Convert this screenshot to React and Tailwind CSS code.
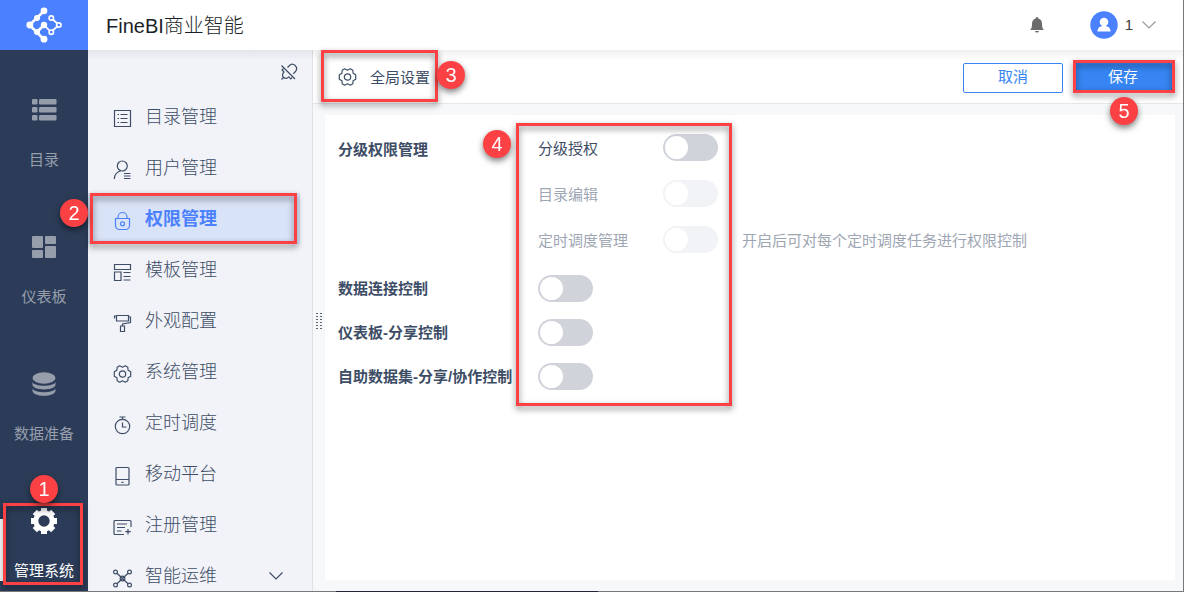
import { useState } from 'react'
import clsx from 'clsx'

const RAIL = [
  { label: '目录', icon: RailList },
  { label: '仪表板', icon: RailGrid },
  { label: '数据准备', icon: RailData },
  { label: '管理系统', icon: RailGear, active: true },
]

const MENU = [
  { label: '目录管理', icon: CatalogIcon },
  { label: '用户管理', icon: UserIcon },
  { label: '权限管理', icon: LockIcon, active: true },
  { label: '模板管理', icon: TemplateIcon },
  { label: '外观配置', icon: RollerIcon },
  { label: '系统管理', icon: GearIcon },
  { label: '定时调度', icon: TimerIcon },
  { label: '移动平台', icon: TabletIcon },
  { label: '注册管理', icon: RegisterIcon },
  { label: '智能运维', icon: NodesIcon, expandable: true },
]

const SUB_SETTINGS = [
  { id: 'grant', label: '分级授权' },
  { id: 'catalog', label: '目录编辑', disabled: true },
  {
    id: 'schedule',
    label: '定时调度管理',
    disabled: true,
    hint: '开启后可对每个定时调度任务进行权限控制',
  },
]

const SETTINGS = [
  { id: 'connection', label: '数据连接控制' },
  { id: 'dashboard', label: '仪表板-分享控制' },
  { id: 'dataset', label: '自助数据集-分享/协作控制' },
]

/* ---------- icons ---------- */

function Logo() {
  return (
    <svg width="36" height="36" viewBox="0 0 36 36" fill="none" stroke="#fff" aria-hidden="true">
      <path d="M18 4 3.500 18 18 32.500M11 25 18 18" strokeWidth="2.600" />
      <path d="M25.300 11 33 18l-8 7-7-7" strokeWidth="1.700" />
      <g fill="#fff" stroke="none">
        <circle cx="18" cy="3.800" r="3.400" />
        <circle cx="11" cy="11" r="3" />
        <circle cx="3.800" cy="18" r="3.400" />
        <circle cx="11" cy="25" r="3" />
        <circle cx="18" cy="18" r="3.200" />
        <circle cx="18" cy="32.200" r="3.400" />
      </g>
      <g fill="#4b80ff" strokeWidth="1.700">
        <circle cx="25.300" cy="11" r="2.200" />
        <circle cx="32.800" cy="18" r="2.200" />
        <circle cx="25.300" cy="25.200" r="2.200" />
      </g>
    </svg>
  )
}

function RailList() {
  return (
    <svg width="28" height="28" viewBox="0 0 28 28" fill="currentColor" aria-hidden="true">
      {[3, 11, 19].map((y) => (
        <g key={y}>
          <rect x="2" y={y} width="5.500" height="5.500" rx="1.200" />
          <rect x="9" y={y} width="17.500" height="5.500" rx="1.200" />
        </g>
      ))}
    </svg>
  )
}

function RailGrid() {
  return (
    <svg width="28" height="28" viewBox="0 0 28 28" fill="currentColor" aria-hidden="true">
      <rect x="2" y="3" width="11" height="12" rx="1" />
      <rect x="15" y="3" width="11" height="8" rx="1" />
      <rect x="2" y="17" width="11" height="8" rx="1" />
      <rect x="15" y="13" width="11" height="12" rx="1" />
    </svg>
  )
}

function RailData() {
  return (
    <svg width="28" height="28" viewBox="0 0 28 28" fill="currentColor" aria-hidden="true">
      <ellipse cx="14" cy="8" rx="11.500" ry="5.800" />
      <path d="M2.500 12c2 5 21 5 23 0v2.500c0 6.500-23 6.500-23 0z" />
      <path d="M2.500 18.500c2 5 21 5 23 0v2c0 7-23 7-23 0z" />
    </svg>
  )
}

function RailGear() {
  return (
    <svg width="28" height="28" viewBox="0 0 28 28" fill="none" stroke="currentColor" aria-hidden="true">
      <circle cx="14" cy="14" r="8.200" strokeWidth="5" />
      {[0, 45, 90, 135].map((deg) => (
        <path
          key={deg}
          d="M14 1v4M14 23v4"
          strokeWidth="6"
          transform={`rotate(${deg} 14 14)`}
        />
      ))}
    </svg>
  )
}

function LineIcon({ children }) {
  return (
    <svg
      width="20"
      height="20"
      viewBox="0 0 20 20"
      fill="none"
      stroke="currentColor"
      strokeWidth="1.200"
      className="shrink-0"
      aria-hidden="true"
    >
      {children}
    </svg>
  )
}

function CatalogIcon() {
  return (
    <LineIcon>
      <path d="M2.500 1.500h16v16h-16zM5.500 5.500h1.500M8.500 5.500h7M5.500 9.500h1.500M8.500 9.500h7M5.500 13.500h1.500M8.500 13.500h7" />
    </LineIcon>
  )
}

function UserIcon() {
  return (
    <LineIcon>
      <circle cx="10.300" cy="6" r="5" />
      <path d="M2.300 19c0-4.500 2.500-7 6.200-8.300M12 13.500h6.500M12 16h6.500M12 18.500h6.500" />
    </LineIcon>
  )
}

function LockIcon() {
  return (
    <LineIcon>
      <path d="M6 7.500V6a4.500 4.500 0 0 1 9 0v1.500M3.500 7.500h14v7a4 4 0 0 1-4 4h-6a4 4 0 0 1-4-4z" />
      <circle cx="10.500" cy="12.800" r="2" />
    </LineIcon>
  )
}

function TemplateIcon() {
  return (
    <LineIcon>
      <path d="M2.500 2.500h16v5h-16zM2.500 10h6.500v8.500H2.500zM11.500 10.500h7M11.500 14.500h7M11.500 18h7" />
    </LineIcon>
  )
}

function RollerIcon() {
  return (
    <LineIcon>
      <path d="M4.500 2.500h12v5.500h-12zM2.500 5.500v-2.500h2M16.500 4h2v5.500l-8 1.500v2M8.500 13h4v5.500h-4z" />
    </LineIcon>
  )
}

function GearIcon() {
  return (
    <LineIcon>
      <path
        strokeLinejoin="round"
        d="M7.700 1.800 10.500 3.200l2.800-1.400 2.500 1.500.3 2.900 2.600 1.600v4.400l-2.600 1.600-.3 2.900-2.500 1.500-2.800-1.400-2.800 1.400-2.500-1.500-.3-2.900-2.600-1.600V7.800l2.600-1.600.3-2.900z"
      />
      <circle cx="10.500" cy="10" r="3.200" />
    </LineIcon>
  )
}

function TimerIcon() {
  return (
    <LineIcon>
      <circle cx="10.500" cy="11.500" r="7.200" />
      <path d="M7.500 2h6M10.500 2v2.300M10.500 7.500v4.500h4" />
    </LineIcon>
  )
}

function TabletIcon() {
  return (
    <LineIcon>
      <rect x="4" y="1.500" width="13" height="17.500" rx="1" />
      <path d="M4 13.500h13M9.500 16.300h2" />
    </LineIcon>
  )
}

function RegisterIcon() {
  return (
    <LineIcon>
      <path d="M12 17.500H3a1 1 0 0 1-1-1v-12a1 1 0 0 1 1-1h15a1 1 0 0 1 1 1V10M5 7h10M5 10.500h8M5 14h4.500M16 12v5.500M13.300 14.700h5.500" />
    </LineIcon>
  )
}

function NodesIcon() {
  return (
    <LineIcon>
      <circle cx="3.500" cy="4" r="1.900" />
      <circle cx="17.500" cy="4" r="1.900" />
      <circle cx="3.500" cy="17" r="1.900" />
      <circle cx="17.500" cy="17" r="1.900" />
      <path d="M5 5.300 16 15.700M16 5.300 5 15.700" />
      <circle cx="10.500" cy="10.500" r="2.300" />
    </LineIcon>
  )
}

function UnpinIcon() {
  return (
    <LineIcon>
      <path d="M2.500 3.500 16 17" />
      <path d="M8.500 5.500 10.500 3.500c3.500-3.500 9.500 1.500 6 6l-2.300 2.300M4.500 6.500 3 8l2 2c-2 2-2 3.500-.5 5.300 1.800 1.500 3.500 1.500 5.300-.5l2 2 1.500-1.500M4.500 15.300 2.500 17.500" />
    </LineIcon>
  )
}

function Chevron({ className }) {
  return (
    <svg
      width="16"
      height="10"
      viewBox="0 0 16 10"
      fill="none"
      stroke="currentColor"
      strokeWidth="1.200"
      className={className}
      aria-hidden="true"
    >
      <path d="M1.500 1.500 8 8l6.500-6.500" />
    </svg>
  )
}

/* ---------- annotations ---------- */

function Outline({ className }) {
  return (
    <span
      className={clsx(
        'absolute z-10 border-3 border-[#fb4143] drop-shadow-[0_3px_3px_rgba(0,0,0,0.5)] pointer-events-none',
        className
      )}
    />
  )
}

function Step({ n, className }) {
  return (
    <span
      className={clsx(
        'absolute z-20 size-7 rounded-full bg-[#fb4143] text-white text-xl font-normal leading-7 text-center drop-shadow-[0_3px_3px_rgba(0,0,0,0.5)] pointer-events-none',
        className
      )}
    >
      {n}
    </span>
  )
}

/* ---------- page ---------- */

function Switch({ id, checked, disabled, onChange }) {
  return (
    <input
      id={id}
      type="checkbox"
      role="switch"
      checked={checked}
      disabled={disabled}
      onChange={onChange}
      className="appearance-none shrink-0 w-[55px] h-[27px] p-[2px] rounded-full bg-[#d0d3da] checked:bg-[#3685f2] disabled:bg-[#f2f3f7] before:block before:size-[23px] before:rounded-full before:bg-white checked:before:ml-7"
    />
  )
}

function Rail() {
  return (
    <nav className="w-[88px] shrink-0 bg-[#2c3c58]">
      <ul className="flex flex-col gap-[62px] pt-[46px]">
        {RAIL.map(({ label, icon: Icon, active }) => (
          <li key={label} className="relative">
            {active && <span className="absolute left-0 bottom-px w-[3px] h-[62px] bg-white" />}
            <a
              href="#"
              className={clsx(
                'flex flex-col items-center gap-[25px] text-[15px] leading-[22px] whitespace-nowrap',
                active ? 'text-white' : 'text-[#969eac]'
              )}
            >
              <Icon />
              {label}
            </a>
            {active && (
              <>
                <Outline className="left-[3px] right-[5px] -top-1 -bottom-[3px]" />
                <Step n={1} className="left-[30px] -top-8" />
              </>
            )}
          </li>
        ))}
      </ul>
    </nav>
  )
}

function SideMenu() {
  return (
    <aside className="w-[225px] shrink-0 bg-[#f2f3f8] border-r border-[#dfe1e8] text-[#3d4d66]">
      <div className="flex justify-end pt-3 pr-[13px] h-[41px]">
        <button type="button" aria-label="取消固定" className="h-5">
          <UnpinIcon />
        </button>
      </div>
      <ul>
        {MENU.map(({ label, icon: Icon, active, expandable }) => (
          <li key={label} className="relative">
            <a
              href="#"
              className={clsx(
                'flex items-center h-[51px] mr-3 pl-6 pr-4 text-lg leading-6',
                active ? 'bg-[#d9e3f7] text-[#4b80ff] font-bold' : 'font-light'
              )}
            >
              <span className="pt-1">
                <Icon />
              </span>
              <span className="ml-[13px]">{label}</span>
              {expandable && <Chevron className="ml-auto" />}
            </a>
            {active && (
              <>
                <Outline className="left-[2px] right-[15px] inset-y-0" />
                <Step n={2} className="-left-7 top-[6px]" />
              </>
            )}
          </li>
        ))}
      </ul>
    </aside>
  )
}

function Header() {
  return (
    <header className="flex h-[50px] shrink-0 items-center bg-white">
      <div className="flex w-[88px] h-full items-center justify-center bg-[#4b80ff]">
        <Logo />
      </div>
      <h1 className="ml-[18px] pt-px text-xl font-light text-[#1b1f27]">FineBI商业智能</h1>
      <button type="button" aria-label="消息" className="ml-auto text-[#6b6b6b]">
        <svg width="16" height="18" viewBox="0 0 16 18" fill="currentColor" aria-hidden="true">
          <path d="M8 1a1.300 1.300 0 0 1 1.300 1.500C12 3.200 13 5.300 13 8c0 3 .5 4.300 1.500 5.300V14h-13v-.7C2.500 12.300 3 11 3 8c0-2.700 1-4.800 3.700-5.500A1.300 1.300 0 0 1 8 1zM6 15h4a2 1.600 0 0 1-4 0z" />
        </svg>
      </button>
      <button type="button" className="flex items-center ml-[45px] mr-[26px] text-[15px] text-[#3d3d3d]">
        <svg width="28" height="28" viewBox="0 0 28 28" aria-hidden="true">
          <circle cx="14" cy="14" r="13.700" fill="#4b80ff" />
          <circle cx="14" cy="11" r="4.300" fill="#fff" />
          <path d="M7.500 20.500c0-4 2.500-5.500 6.500-5.500s6.500 1.500 6.500 5.500z" fill="#fff" />
        </svg>
        <span className="ml-[7px] mr-2">1</span>
        <Chevron className="text-[#999]" />
      </button>
    </header>
  )
}

function Toolbar() {
  return (
    <div className="flex h-[54px] shrink-0 items-center justify-between pr-[10px] bg-white border-b border-[#e5e7ec]">
      <div className="relative flex h-full items-center pl-6 pr-2 pt-px text-[15px] text-[#3d4d66]">
        <GearIcon />
        <h2 className="ml-[13px] pt-[3px]">全局设置</h2>
        <Outline className="left-2 right-0 top-0 bottom-px" />
        <Step n={3} className="-right-[27px] top-[11px]" />
      </div>
      <div className="flex gap-[10px] pt-[2px] text-[15px]">
        <button
          type="button"
          className="w-[100px] h-[30px] rounded-xs border border-[#3685f2] bg-white text-[#3685f2]"
        >
          取消
        </button>
        <div className="relative">
          <button type="button" className="w-[100px] h-[30px] rounded-xs bg-[#3685f2] text-white">
            保存
          </button>
          <Outline className="left-0 -right-[2px] -top-[3px] bottom-0" />
          <Step n={5} className="left-[37px] top-[34px]" />
        </div>
      </div>
    </div>
  )
}

function SettingsPanel() {
  const [values, setValues] = useState({})
  const toggle = (id) => (e) => setValues({ ...values, [id]: e.target.checked })

  return (
    <section className="flex-1 bg-white pl-[13px] pt-[9px] text-[15px] text-[#3d4d66]">
      <div className="relative flex flex-col gap-1">
        <fieldset className="flex">
          <legend className="float-left w-[200px] h-[46px] leading-[52px] font-bold">
            分级权限管理
          </legend>
          <div>
            {SUB_SETTINGS.map(({ id, label, disabled, hint }) => (
              <div
                key={id}
                className={clsx('flex h-[46px] items-center', disabled && 'text-[#9ea6b3]')}
              >
                <label htmlFor={id} className="w-[125px] pt-[5px]">
                  {label}
                </label>
                <Switch
                  id={id}
                  disabled={disabled}
                  checked={!!values[id]}
                  onChange={toggle(id)}
                />
                {hint && <span className="ml-6 pt-[5px]">{hint}</span>}
              </div>
            ))}
          </div>
        </fieldset>
        <div>
          {SETTINGS.map(({ id, label }) => (
            <div key={id} className="flex h-11 items-center">
              <label htmlFor={id} className="w-[200px] pt-[2px] font-bold whitespace-nowrap">
                {label}
              </label>
              <Switch id={id} checked={!!values[id]} onChange={toggle(id)} />
            </div>
          ))}
        </div>
        <Outline className="left-[178px] w-[216px] -top-px -bottom-2" />
        <Step n={4} className="left-[145px] top-[6px]" />
      </div>
    </section>
  )
}

// Floats over the left edge of the content, centred on the full pane height
function DragHandle() {
  return (
    <div className="absolute left-0 inset-y-0 flex w-3 items-center justify-center cursor-col-resize">
      <svg width="6" height="16" viewBox="0 0 6 16" fill="#5d6470" aria-hidden="true">
        {[0, 3, 6, 9, 12, 15].map((y) => (
          <path key={y} d={`M0 ${y}h2v1H0zM4 ${y}h2v1H4z`} />
        ))}
      </svg>
    </div>
  )
}

export default function App() {
  return (
    <div className="flex h-screen flex-col overflow-hidden bg-[#f7f8fa] font-['Liberation_Sans','Noto_Sans_CJK_SC',sans-serif]">
      <div className="flex min-h-0 flex-1 flex-col border-r border-[#77787c]">
        <Header />
        <div className="relative flex min-h-0 flex-1">
          <Rail />
          <SideMenu />
          <main className="relative flex min-w-0 flex-1 flex-col">
            <Toolbar />
            <div className="flex min-h-0 flex-1 pt-[11px] pr-2 pb-[11px] pl-3">
              <SettingsPanel />
            </div>
            <DragHandle />
          </main>
          <div className="absolute left-[88px] right-0 top-0 h-[10px] bg-linear-to-b from-black/6 to-transparent pointer-events-none" />
        </div>
      </div>
      <div className="relative z-30 h-px shrink-0 bg-[#77787c]">
        <div className="ml-[336px] w-[262px] h-px bg-[#22243a]" />
      </div>
    </div>
  )
}
